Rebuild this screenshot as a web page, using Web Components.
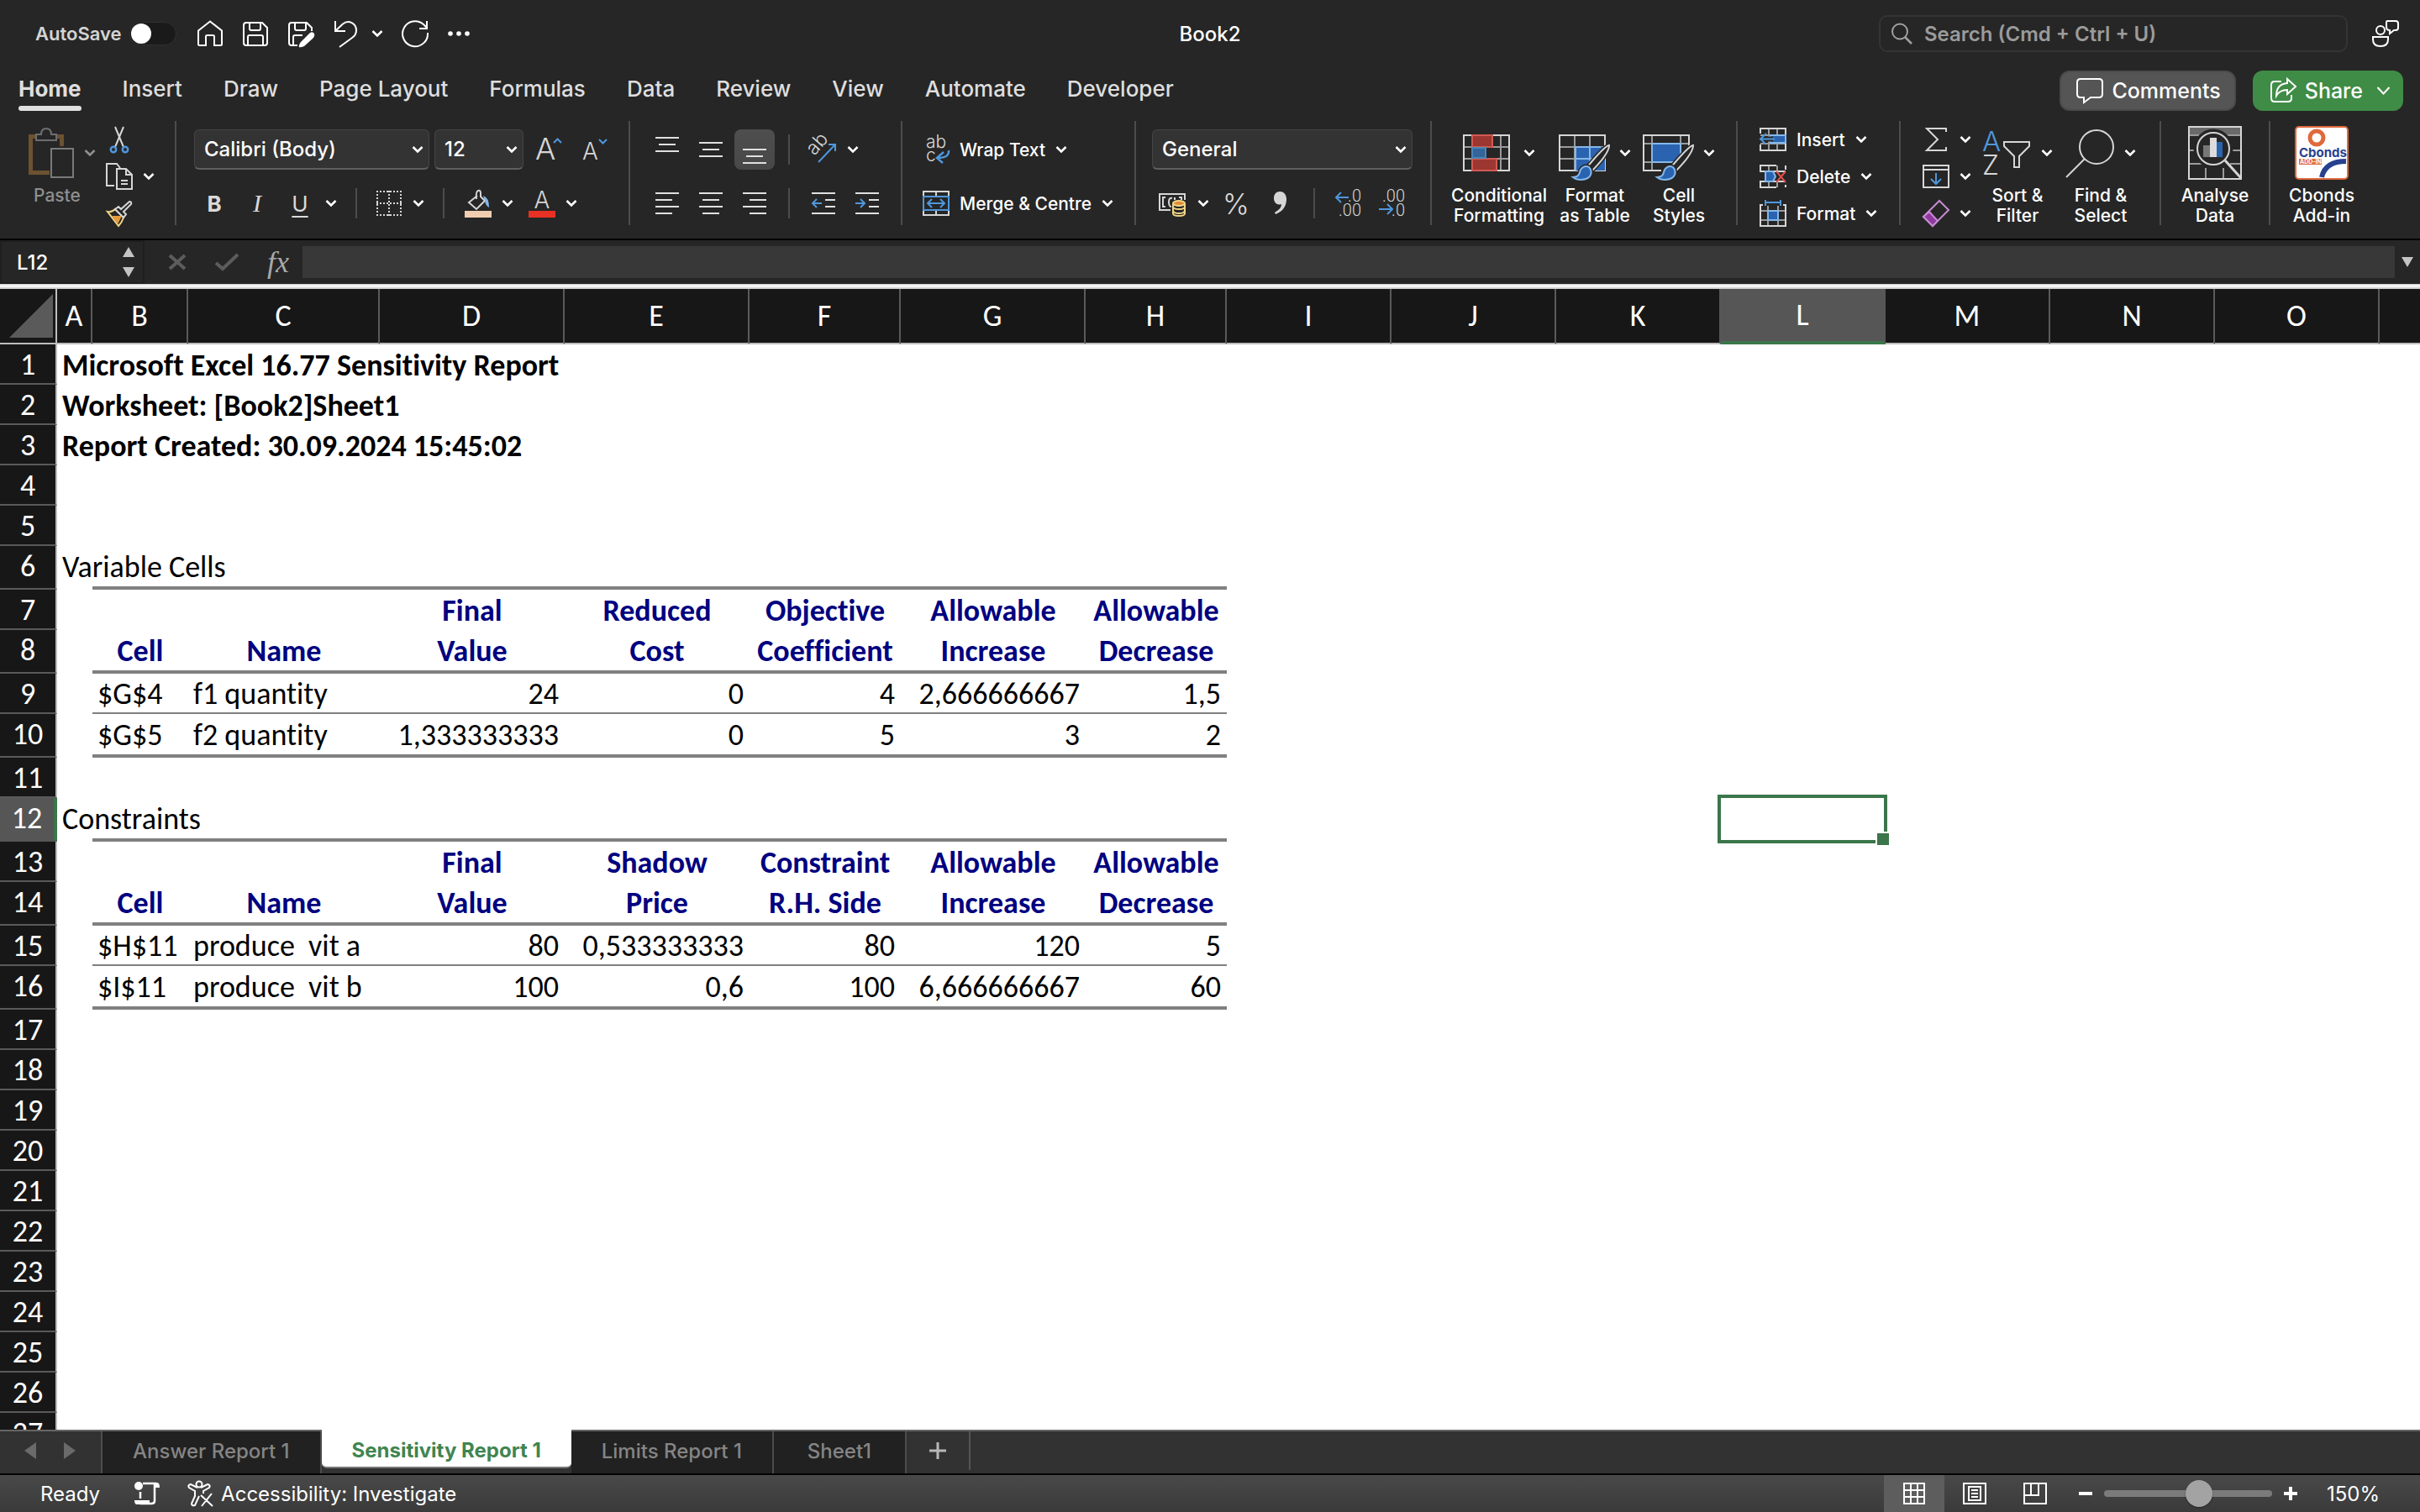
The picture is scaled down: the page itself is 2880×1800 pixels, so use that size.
<!DOCTYPE html>
<html lang="en">
<head>
<meta charset="utf-8">
<title>Book2</title>
<style>
html,body{margin:0;height:100%}
body{font-family:Inter,"Liberation Sans",sans-serif;background:#262626;color:#fff;overflow:hidden}
</style>
</head>
<body>
<workbook-app></workbook-app>
<script>
const BASE = `*{box-sizing:border-box}
button,input,select{font:inherit;color:inherit;background:none;border:0;padding:0;margin:0;outline:0}
button{display:inline-flex;align-items:center}`;

function define(name, css, html) {
  customElements.define(name, class extends HTMLElement {
    connectedCallback() {
      if (this.shadowRoot) return;
      const t = document.createElement('template');
      t.innerHTML = `<style>${BASE}${css}</style>` + (typeof html === 'function' ? html(this) : html);
      this.attachShadow({mode: 'open'}).append(t.content.cloneNode(true));
    }
  });
}

/* ---------- icons ---------- */
const BLUE = '#4f97dc', FILLB = '#2a63b0', LB = '#85b8ea', G = '#d6d6d6', DG = '#9a9a9a';
const bars = (top, b) => {
  const rows = b.map(([x, w], i) => `<path d="M${x} ${top + i * 8}h${w}"/>`).join('');
  return [32, 32, `<g stroke="#e0e0e0">${rows}</g>`];
};
const BRUSH = `<path d="M60 23C54 24 38 44 33 50L38 55C44 49 60 32 60 23Z" fill="#262626" stroke="#262626" stroke-width="5"/><path d="M60 23C54 24 38 44 33 50L38 55C44 49 60 32 60 23Z" fill="#262626" stroke="${G}"/>
 <path d="M36 49C31 46 26 50 25 55C24 60 20 61 17 61C22 65 31 65 36 61C40 57 39 52 36 49Z" fill="${FILLB}" stroke="#262626" stroke-width="5"/>
 <path d="M36 49C31 46 26 50 25 55C24 60 20 61 17 61C22 65 31 65 36 61C40 57 39 52 36 49Z" fill="${FILLB}" stroke="${LB}"/>`;
const ICONS = {
  chev: [14, 8, '<path d="M1.500 1l5.500 5.500L12.500 1" stroke="currentColor" stroke-width="2.600"/>'],
  chevthin: [18, 10, '<path d="M1.500 1l7 7.500L15.500 1" stroke="#fff"/>'],
  home: [32, 32, '<path stroke="#fff" d="M2 12.500L16 1.500L30 12.500V28.500Q30 30 28.500 30H21V19.500Q21 18 19.500 18H12.500Q11 18 11 19.500V30H3.500Q2 30 2 28.500Z"/>'],
  save: [32, 32, '<path stroke="#fff" d="M5 3H24L30 9V27Q30 30 27 30H5Q2 30 2 27V6Q2 3 5 3ZM9 3V10Q9 12 11 12H20Q22 12 22 10V3M7 30V20Q7 18 9 18H23Q25 18 25 20V30"/>'],
  saveedit: [32, 32, '<path stroke="#fff" d="M12 30H5Q2 30 2 27V6Q2 3 5 3H23L29 9V13M9 3V10Q9 12 11 12H20Q22 12 22 10V3M7 30V20Q7 18 9 18H18"/><path d="M27 15Q30 13 32 16Q33 19 30 22L20 31Q15 33 14 32Q13 30 16 26Z" fill="#fff" stroke="none"/>'],
  undo: [32, 32, '<path stroke="#fff" d="M3 1V13H15M3 13L12 4.500C19 -1 28 4 28 12C28 16 26 19 23 21L8 32"/>'],
  redo: [32, 32, '<path stroke="#fff" d="M31 15A15 15 0 1 1 26 5L30 9M30 1V10H21"/>'],
  dots: [28, 8, '<g fill="#fff" stroke="none"><circle cx="4" cy="4" r="2.800"/><circle cx="14" cy="4" r="2.800"/><circle cx="24" cy="4" r="2.800"/></g>'],
  search: [26, 26, `<g stroke="#a0a0a0"><circle cx="11" cy="10.500" r="9"/><path d="M17 17L25 25" stroke-width="2.500"/></g>`],
  people: [34, 34, '<g stroke="#fff"><circle cx="11" cy="13" r="5"/><path d="M2 21H20V24Q20 32 11 32Q2 32 2 24ZM19 2H29Q32 2 32 5V10Q32 13 29 13H27L22 17V13Q18 13 18 9V4Q18 2 19 2"/></g>'],
  comment: [32, 32, '<path stroke="#fff" d="M5 2H27Q31 2 31 6V20Q31 24 27 24H17L9 30V24H5Q1 24 1 20V6Q1 2 5 2Z"/>'],
  share: [32, 32, '<path stroke="#fff" d="M14 5H6Q2 5 2 9V25Q2 29 6 29H22Q26 29 26 25V21M21 2L31 11L21 20V15Q12 15 8 22Q8 8 21 7Z"/>'],
  paste: [54, 60, '<path d="M9 10.500H2.500V53.500H25M33 10.500H39.500V22" stroke="#6c5230" stroke-width="5"/><path d="M9 15V8H15Q15 1 21 1T27 8H33V15Z" stroke="#6e6e6e" fill="#262626"/><rect x="27" y="25" width="26" height="34" stroke="#7a7a7a"/>'],
  cut: [32, 32, `<path stroke="${G}" d="M11 1L21 25M21 1L11 25"/><g stroke="${BLUE}" stroke-width="2.500"><circle cx="9" cy="28" r="3.200"/><circle cx="23" cy="28" r="3.200"/></g>`],
  copy: [32, 32, `<path stroke="${G}" d="M10 27H1V1H13L17 6M13 7H24L31 14V31H13ZM24 7V14H31M18 21H26M18 25H26"/>`],
  brush: [32, 32, `<path d="M2 14Q7 15 11 11L21 21Q19 27 15 31Z" stroke="#f1d684" fill="#262626"/><path d="M7 19H19L14 29Z" fill="#e49a3e" stroke="none"/><path d="M11 11L21 21L24 17L21 14L30 5Q31 2 28 2L18 11L15 8Z" stroke="${G}" fill="#262626"/>`],
  grow: [32, 32, `<text x="0" y="28" font-size="36" font-weight="300">A</text><path d="M22 8l4.500-4.500L31 8" stroke="${BLUE}"/>`],
  shrink: [32, 32, `<text x="0" y="28" font-size="28" font-weight="300">A</text><path d="M20 4l4.500 4.500L29 4" stroke="${BLUE}"/>`],
  borders: [32, 32, `<path stroke="${G}" stroke-dasharray="2 2" d="M1 2H31M1 30H31M2 1V31M30 1V31M1 16H31M16 1V31"/>`],
  fill: [32, 34, `<rect y="26" width="32" height="8" fill="#f2cdb0" stroke="none"/><path stroke="${G}" d="M15 8L5 16L14 24L24 14L19 9V5Q19 1 16 2Q13 3 14 12"/><path d="M22 8Q29 10 29 22Q25 20 24 14Z" fill="${LB}" stroke="none"/>`],
  fcolor: [32, 34, `<rect y="26" width="32" height="8" fill="#e83123" stroke="none"/><text x="16" y="23" font-size="28" font-weight="300" text-anchor="middle">A</text>`],
  vtop: bars(2, [[2, 28], [6, 20], [2, 28]]),
  vmid: bars(8, [[2, 28], [6, 20], [2, 28]]),
  vbot: bars(16, [[2, 28], [6, 20], [2, 28]]),
  aleft: bars(4, [[2, 28], [2, 20], [2, 28], [2, 20]]),
  acen: bars(4, [[2, 28], [6, 20], [2, 28], [6, 20]]),
  aright: bars(4, [[2, 28], [10, 20], [2, 28], [10, 20]]),
  outdent: [32, 32, `<path stroke="#e0e0e0" d="M2 4H30M18 12H30M18 20H30M2 28H30"/><path stroke="${BLUE}" d="M3 16H14M8 11L3 16L8 21"/>`],
  indent: [32, 32, `<path stroke="#e0e0e0" d="M2 4H30M18 12H30M18 20H30M2 28H30"/><path stroke="${BLUE}" d="M2 16H13M8 11L13 16L8 21"/>`],
  orient: [34, 34, `<text x="7" y="25" font-size="23" font-weight="300" transform="rotate(-48 7 25)">ab</text><path stroke="${BLUE}" d="M12 32L32 11M24 11H32V19"/>`],
  wrap: [32, 34, `<text x="4" y="15" font-size="21" font-weight="300">ab</text><text x="4" y="31" font-size="21" font-weight="300">c</text><path stroke="${BLUE}" stroke-width="2.500" d="M31 18Q32 27 18 27M25 20L17 27L24 33"/>`],
  merge: [32, 32, `<path stroke="${G}" d="M1 2H31V30H1ZM16 2V8M16 24V30"/><rect x="1" y="8" width="30" height="16" stroke="${BLUE}" fill="#262626"/><path stroke="${BLUE}" d="M6 16H26M11 11L6 16L11 21M21 11L26 16L21 21"/>`],
  money: [34, 32, `<path stroke="${G}" d="M14 24H1V5H31V12M8 9H5V20H8M16 10Q12 9 12 14.500T15 20M19 9V12M24 9H27V12"/><g stroke="#f1d684" fill="#262626"><path d="M17 16V28Q17 31 24 31T31 28V16"/><ellipse cx="24" cy="16" rx="7" ry="3" fill="#e08a3a"/><path d="M17 20Q17 23 24 23T31 20M17 25Q18 28 24 28T31 25" fill="none"/></g>`],
  comma: [20, 32, `<path d="M10 2C15 2 18 6 18 11C18 20 13 26 5 29L4 27C9 24 12 21 12 17C7 19 3 15 3 10C3 5 6 2 10 2Z" fill="${G}" stroke="none"/>`],
  incdec: [34, 34, `<g font-family="Roboto" font-weight="300" font-size="20"><text x="32" y="15" text-anchor="end">.0</text><text x="32" y="32" text-anchor="end">.00</text></g><path stroke="${BLUE}" d="M2 10H17M8 4L2 10L8 16"/>`],
  decdec: [34, 34, `<g font-family="Roboto" font-weight="300" font-size="20"><text x="32" y="15" text-anchor="end">.00</text><text x="32" y="32" text-anchor="end">.0</text></g><path stroke="${BLUE}" d="M1 24H17M11 18L17 24L11 30"/>`],
  cond: [60, 64, `<path stroke="${DG}" d="M11 11V53M45 11V53M1 25H55M1 39H55"/><rect x="1" y="11" width="54" height="42" stroke="${G}"/><g fill="#9c3631" stroke="#d25a54"><rect x="11" y="11" width="24" height="14"/><rect x="11" y="39" width="29" height="14"/></g><rect x="11" y="26" width="16" height="12" fill="#33659a" stroke="#4a86b8"/>`],
  ftable: [60, 64, `<path stroke="${DG}" d="M19 11V53M37 11V53M1 25H55M1 39H55"/><rect x="1" y="11" width="54" height="42" stroke="${G}"/><path d="M20 25H55V53H20Z" fill="${FILLB}" stroke="none"/><path d="M20 53V25H50M20 39H42M37 25V44" stroke="${LB}"/>${BRUSH}`],
  cstyles: [60, 64, `<path stroke="${DG}" d="M11 11V53M45 11V53M1 21H55M1 43H55"/><path d="M55 28V11H1V53H22" stroke="${G}"/><rect x="11" y="21" width="34" height="22" fill="${FILLB}" stroke="${LB}"/><path d="M34 55H58V38H46Z" fill="#262626" stroke="none"/>${BRUSH}`],
  cins: [32, 32, `<path stroke="${DG}" d="M11 3V29M21 3V29M1 11H31M1 21H31"/><path stroke="${G}" d="M1 9V3H31V29H1V22"/><rect x="13" y="11" width="18" height="9" fill="${FILLB}" stroke="${LB}"/><path stroke="#262626" stroke-width="6" d="M2 15.500H16"/><path stroke="${BLUE}" d="M1 15.500H18M8 9L1 15.500L8 22"/>`],
  cdel: [32, 32, `<path stroke="${DG}" d="M11 3V10M21 3V10M11 22V29M21 22V29"/><path stroke="${G}" d="M20 3H1V10H31M31 8V3M1 10V3M31 22H1V29H20M31 29V26"/><path d="M7 10H16L19 16L16 22H7Z" fill="${FILLB}" stroke="${LB}"/><path d="M20 10L31 23M31 10L20 23" stroke="#df5049"/>`],
  cfmt: [32, 34, `<path stroke="${DG}" d="M10 8V32M22 8V32M1 14H31M1 25H31"/><path stroke="${G}" d="M4 7H1V32H31V7H28"/><rect x="10" y="14" width="12" height="11" fill="${FILLB}" stroke="${LB}"/><path stroke="${BLUE}" d="M7 4H25M7 1V8M25 1V8"/>`],
  sigma: [32, 32, `<path stroke="${G}" d="M28 7V3H5L18 16L5 29H28V25"/>`],
  filld: [32, 32, `<path stroke="${G}" d="M1 3H31V29H1ZM1 8H31"/><path stroke="${BLUE}" d="M16 12V25M10 19L16 25L22 19"/>`],
  eraser: [32, 34, `<path d="M20 2L31 13L12 32L1 21Z" stroke="#c78ad4"/><path d="M8 15L18 26L12 32L1 21Z" fill="#8f3a9e" stroke="#c78ad4"/>`],
  sort: [58, 64, `<text x="0" y="30" font-size="33" font-weight="300" style="fill:${BLUE}">A</text><text x="0" y="58" font-size="32" font-weight="300">Z</text><path stroke="${G}" d="M26 19H56V24L44 36V49H38V36L26 24Z"/>`],
  find: [58, 64, `<circle cx="37" cy="25" r="20" stroke="${G}"/><path stroke="${G}" d="M23 39L1 61"/>`],
  analyse: [64, 64, `<path d="M1 2H63V10H1Z" fill="#6a6a6a" stroke="none"/><path stroke="${DG}" d="M1 11H63M1 29H10M52 29H63M1 45H18M50 45H63M21 50V63M42 50V63"/><rect x="1" y="1" width="62" height="62" stroke="${G}"/><circle cx="30" cy="27" r="22" fill="#262626" stroke="#262626" stroke-width="3"/><circle cx="30" cy="27" r="19" stroke="${G}"/><path stroke="${G}" stroke-width="3" d="M44 41L63 62"/><g stroke="none"><rect x="18" y="23" width="8" height="14" fill="#777"/><rect x="26" y="14" width="8" height="23" fill="#dcdcdc"/><rect x="34" y="19" width="7" height="18" fill="${FILLB}"/></g>`],
  cbonds: [64, 64, `<rect x="1" y="1" width="62" height="62" rx="4" fill="#fff" stroke="#e0693c"/><circle cx="26" cy="14" r="8" stroke="#e0693c" stroke-width="5"/><path d="M32 61Q36 42 61 42" stroke="#27418f" stroke-width="6"/><text x="5" y="37" font-size="15" font-weight="700" style="fill:#27418f">Cbonds</text><rect x="5" y="39" width="27" height="7" fill="#e0693c" stroke="none"/><text x="6" y="45" font-size="7" font-weight="700" style="fill:#fff">ADD-IN</text>`],
  cancel: [22, 22, '<path stroke="#5c5c5c" stroke-width="4" d="M2 3L20 19M20 3L2 19"/>'],
  ok: [30, 22, '<path stroke="#5c5c5c" stroke-width="4" d="M2 12L10 19L28 2"/>'],
  up: [14, 12, '<path d="M7 0L14 12H0Z" fill="#c4c4c4" stroke="none"/>'],
  down: [14, 12, '<path d="M7 12L14 0H0Z" fill="#c4c4c4" stroke="none"/>'],
  left: [14, 20, '<path d="M14 0V20L0 10Z" fill="#6a6a6a" stroke="none"/>'],
  right: [14, 20, '<path d="M0 0V20L14 10Z" fill="#6a6a6a" stroke="none"/>'],
  plus: [20, 20, '<path d="M10 0V20M0 10H20" stroke="#b8b8b8" stroke-width="3"/>'],
  macro: [32, 30, '<path stroke="#fff" stroke-width="2.500" d="M11 3H27M25 4V24Q25 27 21 27H8M8 13V21"/><circle cx="6" cy="6" r="5" fill="#fff" stroke="none"/><path d="M1 23H19V28H4Q1 28 1 23ZM24 2H28Q31 2 31 8H24Z" fill="#fff" stroke="none"/>'],
  access: [32, 32, '<g stroke="#fff"><circle cx="14" cy="5" r="3.500"/><path d="M12 9L4 5Q0 6 2 9L9 13V19L5 28Q5 31 9 30L14 19M16 9L24 5Q28 6 26 9L19 13V16M16 18L30 31M29 16L17 31"/></g>'],
  vnormal: [28, 28, '<path stroke="#fff" d="M2 2H26V26H2ZM10 2V26M18 2V26M2 10H26M2 18H26"/>'],
  vpage: [28, 28, '<path stroke="#fff" d="M1 2H27V26H1ZM7 6H21V22H7ZM10 10H18M10 14H18M10 18H18"/>'],
  vbreak: [28, 28, '<path stroke="#fff" d="M1 2H27V26H1ZM9 2V16M18 2V16H1"/>'],
  minus: [16, 16, '<path stroke="#fff" stroke-width="4" d="M0 8H16"/>'],
  zplus: [16, 16, '<path stroke="#fff" stroke-width="4" d="M0 8H16M8 0V16"/>'],
};
define('x-icon', `:host{display:inline-flex;flex:none}svg{display:block;overflow:visible}
text{fill:#d6d6d6;stroke:none;font-family:Inter,sans-serif}g[font-family=Roboto] text{font-family:Roboto,sans-serif}`,
  el => { const [w, h, s] = ICONS[el.getAttribute('name')];
    return `<svg width="${w}" height="${h}" viewBox="0 0 ${w} ${h}" fill="none" stroke-width="2" aria-hidden="true">${s}</svg>`; });

/* ---------- title bar ---------- */
define('title-bar', `:host{display:grid;grid-template-columns:1fr auto 1fr;align-items:center;height:80px;padding:0 24px;font-size:24px;font-weight:500}
.left,.right{display:flex;align-items:center}.left{padding-left:18px}.right{justify-content:flex-end;gap:28px}
label{font-size:22px;font-weight:600;color:#d4d4d4;width:112px}
.toggle{appearance:none;width:56px;height:28px;border-radius:14px;background:#1a1a1a;border:1px solid #303030;display:flex;align-items:center;padding:0 1px;margin-right:24px}
.toggle::before{content:"";width:24px;height:24px;border-radius:50%;background:#fff}
.tools{display:flex;align-items:center;gap:22px}.split{display:flex;align-items:center;gap:14px}
h1{font:inherit;margin:0}
.search{display:flex;align-items:center;gap:14px;width:558px;height:44px;border:2px solid #343434;border-radius:10px;padding-left:12px}
.search input{flex:1;font-weight:600}.search input::placeholder{color:#9b9b9b;opacity:1}`,
`<div class="left"><label for="as">AutoSave</label><input class="toggle" id="as" type="checkbox">
<div class="tools"><button aria-label="Home"><x-icon name="home"></x-icon></button><button aria-label="Save"><x-icon name="save"></x-icon></button><button aria-label="Save as"><x-icon name="saveedit"></x-icon></button>
<button class="split" aria-label="Undo"><x-icon name="undo"></x-icon><x-icon name="chev"></x-icon></button>
<button aria-label="Redo"><x-icon name="redo"></x-icon></button><button aria-label="More"><x-icon name="dots"></x-icon></button></div></div>
<h1>Book2</h1>
<div class="right"><div class="search"><x-icon name="search"></x-icon><input type="search" aria-label="Search" placeholder="Search (Cmd + Ctrl + U)"></div>
<button aria-label="Presence"><x-icon name="people"></x-icon></button></div>`);

/* ---------- menu tabs ---------- */
define('menu-tab', `:host{display:block}button{display:flex;flex-direction:column;gap:4px;font-size:26px;line-height:32px;font-weight:500;color:#dedede}
button::after{content:"";height:6px;width:100%;border-radius:3px}
:host([active]) button{font-weight:700}:host([active]) button::after{background:#e0e0e0}`, `<button><slot></slot></button>`);
define('menu-bar', `:host{display:flex;justify-content:space-between;height:64px;padding:0 20px 0 22px}
nav{display:flex;gap:49px;padding-top:10px}.actions{display:flex;gap:20px;padding-top:4px}
.actions button{height:48px;border-radius:12px;font-size:25px;font-weight:500;gap:10px;padding:0 16px 0 18px}
.actions .c{background:#555;border:2px solid #4a4a4a}.actions .s{background:#3f8c46;padding:0 14px 0 20px}.s x-icon:last-child{margin-left:6px}`,
`<nav><menu-tab active>Home</menu-tab><menu-tab>Insert</menu-tab><menu-tab>Draw</menu-tab><menu-tab>Page Layout</menu-tab><menu-tab>Formulas</menu-tab><menu-tab>Data</menu-tab><menu-tab>Review</menu-tab><menu-tab>View</menu-tab><menu-tab>Automate</menu-tab><menu-tab>Developer</menu-tab></nav>
<div class="actions"><button class="c"><x-icon name="comment"></x-icon>Comments</button><button class="s"><x-icon name="share"></x-icon>Share<x-icon name="chevthin"></x-icon></button></div>`);

/* ---------- ribbon pieces ---------- */
define('rb-select', `:host{display:grid;width:var(--w);height:48px;font-size:24px;font-weight:500}
select{grid-area:1/1;appearance:none;width:100%;background:#333;border:1px solid #454545;border-bottom:2px solid #5f5f5f;border-radius:6px;padding:0 11px}
x-icon{grid-area:1/1;place-self:center end;margin-right:7px;pointer-events:none}`,
  el => `<select aria-label="${el.getAttribute('label')}"><option>${el.getAttribute('value')}</option></select><x-icon name="chev"></x-icon>`);
define('rb-tool', `:host{display:block}button{gap:12px;font-size:21px;font-weight:500;height:44px}
:host([slot48]) button{width:48px;height:48px;justify-content:center;border-radius:8px}
:host([pressed]) button{background:linear-gradient(#4e4e4e,#484848)}`,
  el => `<button aria-label="${el.getAttribute('label') || el.textContent.trim()}">${el.hasAttribute('icon') ? `<x-icon name="${el.getAttribute('icon')}"></x-icon>` : ''}<slot></slot>${el.hasAttribute('menu') ? '<x-icon name="chev"></x-icon>' : ''}</button>`);
define('rb-big', `:host{display:block;width:var(--w)}button{width:100%;flex-direction:column;font-size:21px;line-height:24px;font-weight:500;text-align:center;padding-top:6px}
.i{display:flex;align-items:center;justify-content:center;gap:12px;height:64px;margin-bottom:7px}
:host([dim]) button{color:#8f8f8f;align-items:flex-start}:host([dim]) span:last-child{padding-left:6px}`,
  el => `<button><span class="i"><x-icon name="${el.getAttribute('icon')}"></x-icon>${el.hasAttribute('menu') ? '<x-icon name="chev"></x-icon>' : ''}</span><span><slot></slot></span></button>`);
define('rb-group', `:host{display:flex;width:var(--w);flex:none;height:124px;border-right:2px solid #4c4c4c;padding-left:var(--p)}
:host([last]){border:0}:host([rows]){flex-direction:column;gap:16px;padding-top:10px}`, `<slot></slot>`);
define('ribbon-bar', `:host{display:flex;height:142px;border-bottom:2px solid #000;font-weight:500}
.row{display:flex;align-items:center;height:48px;flex:none}
.stack{display:flex;flex-direction:column;height:132px;justify-content:space-between}
.sep{width:2px;height:36px;background:#4c4c4c}
.g4{gap:4px}.g3{gap:3px}.g6{gap:6px}.l6{margin-left:6px}.l8{margin-left:8px}.l12{margin-left:12px}.l16{margin-left:16px}.l18{margin-left:18px}.l22{margin-left:22px}.l24{margin-left:24px}
b,i,u,.pc{font-size:26px;color:#dadada}i{font-family:"Liberation Serif",serif;font-size:30px}u{font-weight:400;text-underline-offset:5px;text-decoration-thickness:2px}.pc{font-size:34px;font-weight:300}`,
`<rb-group style="--w:210px;--p:34px"><rb-big dim icon="paste" menu style="--w:80px">Paste</rb-big>
<div class="stack l12"><rb-tool icon="cut" label="Cut"></rb-tool><rb-tool icon="copy" menu label="Copy"></rb-tool><rb-tool icon="brush" label="Format painter"></rb-tool></div></rb-group>
<rb-group rows style="--w:540px;--p:21px">
<div class="row g6"><rb-select label="Font" value="Calibri (Body)" style="--w:280px"></rb-select><rb-select label="Font size" value="12" style="--w:106px"></rb-select><rb-tool class="l8" icon="grow" label="Increase font size"></rb-tool><rb-tool class="l18" icon="shrink" label="Decrease font size"></rb-tool></div>
<div class="row"><div class="row g3"><rb-tool slot48><b>B</b></rb-tool><rb-tool slot48><i>I</i></rb-tool><rb-tool slot48><u>U</u></rb-tool></div><rb-tool class="l6" menu label="Underline style"></rb-tool><div class="sep l22"></div><rb-tool class="l22" icon="borders" menu label="Borders"></rb-tool><div class="sep l22"></div><rb-tool class="l24" icon="fill" menu label="Fill colour"></rb-tool><rb-tool class="l18" icon="fcolor" menu label="Font colour"></rb-tool></div>
</rb-group>
<rb-group rows style="--w:324px;--p:20px">
<div class="row"><div class="row g4"><rb-tool slot48 icon="vtop" label="Top"></rb-tool><rb-tool slot48 icon="vmid" label="Middle"></rb-tool><rb-tool slot48 pressed icon="vbot" label="Bottom"></rb-tool></div><div class="sep l16"></div><rb-tool class="l22" icon="orient" menu label="Orientation"></rb-tool></div>
<div class="row"><div class="row g4"><rb-tool slot48 icon="aleft" label="Left"></rb-tool><rb-tool slot48 icon="acen" label="Centre"></rb-tool><rb-tool slot48 icon="aright" label="Right"></rb-tool></div><div class="sep l16"></div><div class="row g4 l16"><rb-tool slot48 icon="outdent" label="Outdent"></rb-tool><rb-tool slot48 icon="indent" label="Indent"></rb-tool></div></div>
</rb-group>
<rb-group rows style="--w:278px;--p:24px"><div class="row"><rb-tool icon="wrap" menu>Wrap Text</rb-tool></div><div class="row"><rb-tool icon="merge" menu>Merge &amp; Centre</rb-tool></div></rb-group>
<rb-group rows style="--w:352px;--p:19px"><rb-select label="Number format" value="General" style="--w:310px"></rb-select>
<div class="row"><rb-tool class="l8" icon="money" menu label="Currency"></rb-tool><div class="row g4 l8"><rb-tool slot48><span class="pc">%</span></rb-tool><rb-tool slot48 icon="comma" label="Comma style"></rb-tool></div><div class="sep l16"></div><div class="row g4 l16"><rb-tool slot48 icon="incdec" label="Increase decimal"></rb-tool><rb-tool slot48 icon="decdec" label="Decrease decimal"></rb-tool></div></div></rb-group>
<rb-group style="--w:364px;--p:16px"><rb-big icon="cond" menu style="--w:128px">Conditional<br>Formatting</rb-big><rb-big icon="ftable" menu style="--w:100px">Format<br>as Table</rb-big><rb-big icon="cstyles" menu style="--w:100px">Cell<br>Styles</rb-big></rb-group>
<rb-group style="--w:194px;--p:26px"><div class="stack"><rb-tool icon="cins" menu>Insert</rb-tool><rb-tool icon="cdel" menu>Delete</rb-tool><rb-tool icon="cfmt" menu>Format</rb-tool></div></rb-group>
<rb-group style="--w:310px;--p:26px"><div class="stack"><rb-tool icon="sigma" menu label="AutoSum"></rb-tool><rb-tool icon="filld" menu label="Fill"></rb-tool><rb-tool icon="eraser" menu label="Clear"></rb-tool></div><rb-big class="l6" icon="sort" menu style="--w:98px">Sort &amp;<br>Filter</rb-big><rb-big icon="find" menu style="--w:100px">Find &amp;<br>Select</rb-big></rb-group>
<rb-group style="--w:130px;--p:0px"><rb-big icon="analyse" style="--w:128px">Analyse<br>Data</rb-big></rb-group>
<rb-group last style="--w:122px;--p:0px"><rb-big icon="cbonds" style="--w:122px">Cbonds<br>Add-in</rb-big></rb-group>`);

/* ---------- formula bar ---------- */
define('formula-bar', `:host{display:flex;align-items:center;height:58px;padding-bottom:6px;background:linear-gradient(#c9c9c9,#fff 40%,#c4c4c4) bottom/100% 6px no-repeat,#262626}
.name{display:flex;align-items:center;width:172px;height:52px;border:2px solid #1f1f1f;padding:0 10px 0 18px;justify-content:space-between}
.name input{width:100px;font-size:24px;font-weight:500}.step{display:flex;flex-direction:column;gap:12px}
.acts{display:flex;align-items:center;gap:33px;padding-left:28px;width:188px}
.fx{font:italic 36px/40px "Liberation Serif",serif;color:#a8a8a8}
.f{flex:1;height:38px;background:#383838}.x{width:30px;justify-content:center}`,
`<div class="name"><input aria-label="Name box" value="L12"><div class="step"><button aria-label="Previous"><x-icon name="up"></x-icon></button><button aria-label="Next"><x-icon name="down"></x-icon></button></div></div>
<div class="acts"><button aria-label="Cancel"><x-icon name="cancel"></x-icon></button><button aria-label="Enter"><x-icon name="ok"></x-icon></button><button class="fx">fx</button></div>
<input class="f" aria-label="Formula"><button class="x" aria-label="Expand"><x-icon name="down"></x-icon></button>`);

/* ---------- sheet grid ---------- */
const COLS = [['A', 42], ['B', 114], ['C', 228], ['D', 220], ['E', 220], ['F', 180], ['G', 220], ['H', 168], ['I', 196], ['J', 196], ['K', 196], ['L', 196], ['M', 196], ['N', 196], ['O', 196], ['', 0]];
const DATA = {
  1: {A: '*Microsoft Excel 16.77 Sensitivity Report'}, 2: {A: '*Worksheet: [Book2]Sheet1'}, 3: {A: '*Report Created: 30.09.2024 15:45:02'},
  6: {A: 'Variable Cells'},
  7: {D: '^Final', E: '^Reduced', F: '^Objective', G: '^Allowable', H: '^Allowable'},
  8: {B: '^Cell', C: '^Name', D: '^Value', E: '^Cost', F: '^Coefficient', G: '^Increase', H: '^Decrease'},
  9: {B: '$G$4', C: 'f1 quantity', D: '>24', E: '>0', F: '>4', G: '>2,666666667', H: '>1,5'},
  10: {B: '$G$5', C: 'f2 quantity', D: '>1,333333333', E: '>0', F: '>5', G: '>3', H: '>2'},
  12: {A: 'Constraints'},
  13: {D: '^Final', E: '^Shadow', F: '^Constraint', G: '^Allowable', H: '^Allowable'},
  14: {B: '^Cell', C: '^Name', D: '^Value', E: '^Price', F: '^R.H. Side', G: '^Increase', H: '^Decrease'},
  15: {B: '$H$11', C: 'produce  vit a', D: '>80', E: '>0,533333333', F: '>80', G: '>120', H: '>5'},
  16: {B: '$I$11', C: 'produce  vit b', D: '>100', E: '>0,6', F: '>100', G: '>6,666666667', H: '>60'},
};
const THICK = [6, 8, 10, 12, 14, 16], THIN = [9, 15];
const KIND = {'*': 'b', '^': 'h', '>': 'n'};
define('sheet-grid', `:host{display:block;flex:1;min-height:0;overflow:hidden;background:#fff;color:#000;font-family:Carlito,Lato,sans-serif;font-size:36px;font-variant-ligatures:none}
table{table-layout:fixed;width:100%;border-collapse:separate;border-spacing:0}
th{font-weight:400;background:#171717;color:#fff;padding:0}
thead th{height:66px;line-height:64px;border-right:2px solid #5a5a5a;border-bottom:2px solid #bdbdbd}
thead th:last-child{border-right:0}thead th:first-child{border-right-color:#bdbdbd;vertical-align:bottom;padding:0 3px 6px 10px}
.corner{display:block;margin-left:auto}
thead th.sel{background:#565656;border-right-color:#565656;border-bottom:4px solid #3b764b;line-height:62px}thead th:has(+.sel){border-right-color:#565656}
tbody th{border-right:2px solid #bdbdbd;border-bottom:2px solid #5a5a5a;vertical-align:top;line-height:44px;padding-top:2px}
tbody th.sel{background:#565656;border-right:4px solid #3b764b;border-bottom-color:#565656}
tr{height:48px}tr.thick{height:52px}
td{padding:2px 7px 0 6px;vertical-align:top;line-height:46px;height:48px;white-space:pre;position:relative}
.thick td{height:52px}.thick .r{border-bottom:4px solid #808080}.thin td{line-height:44px;padding-top:3px}.thin .r{border-bottom:2px solid #808080;padding-top:2px}
.b,.h{font-weight:700}.h{color:#000080;text-align:center;padding-left:0;padding-right:0}.n{text-align:right}
.cursor{position:absolute;inset:-4px -2px -2px -4px;border:4px solid #3b764b}
.cursor::after{content:"";position:absolute;right:-8px;bottom:-8px;width:14px;height:14px;background:#3b764b;border:2px solid #fff}`,
() => {
  const head = COLS.map(([c]) => `<th${c === 'L' ? ' class="sel"' : ''} scope="col">${c}</th>`).join('');
  let rows = '';
  for (let r = 1; r <= 27; r++) {
    const cells = COLS.map(([c]) => {
      let v = (DATA[r] || {})[c] || '', k = KIND[v[0]] || '';
      if (k) v = v.slice(1);
      const ruled = c >= 'B' && c <= 'H' ? ' r' : '';
      if (r === 12 && c === 'L') v = '<div class="cursor"></div>';
      return `<td class="${k}${ruled}">${v}</td>`;
    }).join('');
    rows += `<tr class="${THICK.includes(r) ? 'thick' : THIN.includes(r) ? 'thin' : ''}"><th scope="row"${r === 12 ? ' class="sel"' : ''}>${r}</th>${cells}</tr>`;
  }
  return `<table><colgroup><col style="width:68px">${COLS.map(([, w]) => `<col${w ? ` style="width:${w}px"` : ''}>`).join('')}</colgroup>
<thead><tr><th><svg class="corner" width="52" height="52" viewBox="0 0 52 52"><path d="M52 0V52H0Z" fill="#5a5a5a"/></svg></th>${head}</tr></thead><tbody>${rows}</tbody></table>`;
});

/* ---------- sheet tabs ---------- */
define('sheet-tab', `:host{display:block;height:50px;min-width:158px;background:#212121;border-right:2px solid #4c4c4c}
button{width:100%;justify-content:center;height:46px;padding:0 36px;font-size:24px;font-weight:500;color:#858585}
:host([active]){background:#323232;border:0;margin-top:-2px}
:host([active]) button{background:#fff;color:#3f8551;font-weight:700;border-radius:0 0 6px 6px;border-bottom:2px solid #777;padding-top:4px}`, `<button><slot></slot></button>`);
define('sheet-tabs', `:host{display:flex;height:52px;background:#323232;border-top:2px solid #666}
.nav{display:flex;gap:33px;width:122px;padding:0 0 4px 29px;border-right:2px solid #4c4c4c}
.add{width:76px;height:46px;justify-content:center;border-right:2px solid #555}`,
`<div class="nav"><button aria-label="Previous sheet"><x-icon name="left"></x-icon></button><button aria-label="Next sheet"><x-icon name="right"></x-icon></button></div>
<sheet-tab>Answer Report 1</sheet-tab><sheet-tab active>Sensitivity Report 1</sheet-tab><sheet-tab>Limits Report 1</sheet-tab><sheet-tab>Sheet1</sheet-tab><button class="add" aria-label="Add sheet"><x-icon name="plus"></x-icon></button>`);

/* ---------- status bar ---------- */
define('status-bar', `:host{display:flex;justify-content:space-between;height:46px;border-top:2px solid #000;background:linear-gradient(#494949,#3a3a3a);font-size:24px;padding-left:48px}
div{display:flex;align-items:center}.l{gap:40px}.m{gap:32px}.a{gap:8px}.v{width:72px;height:44px;justify-content:center}.on{background:#5d5d5d}
.z{gap:14px;padding-left:16px}input{appearance:none;width:200px;height:32px}
input::-webkit-slider-runnable-track{height:8px;border-radius:4px;background:#7b7b7b}
input::-webkit-slider-thumb{appearance:none;width:32px;height:32px;border-radius:50%;background:#a3a3a3;margin-top:-12px;box-shadow:0 1px 2px #0006}
output{width:132px;padding-left:21px;font-size:24px}`,
`<div class="l"><span>Ready</span><div class="m"><button aria-label="Record macro"><x-icon name="macro"></x-icon></button><button class="a"><x-icon name="access"></x-icon>Accessibility: Investigate</button></div></div>
<div><button class="v on" aria-label="Normal view"><x-icon name="vnormal"></x-icon></button><button class="v" aria-label="Page layout view"><x-icon name="vpage"></x-icon></button><button class="v" aria-label="Page break view"><x-icon name="vbreak"></x-icon></button>
<div class="z"><button aria-label="Zoom out"><x-icon name="minus"></x-icon></button><input type="range" aria-label="Zoom" min="0" max="100" value="58"><button aria-label="Zoom in"><x-icon name="zplus"></x-icon></button><output>150%</output></div></div>`);

define('workbook-app', `:host{display:flex;flex-direction:column;height:100vh;overflow:hidden}`,
`<title-bar></title-bar><menu-bar></menu-bar><ribbon-bar></ribbon-bar><formula-bar></formula-bar><sheet-grid></sheet-grid><sheet-tabs></sheet-tabs><status-bar></status-bar>`);
</script>
</body>
</html>
